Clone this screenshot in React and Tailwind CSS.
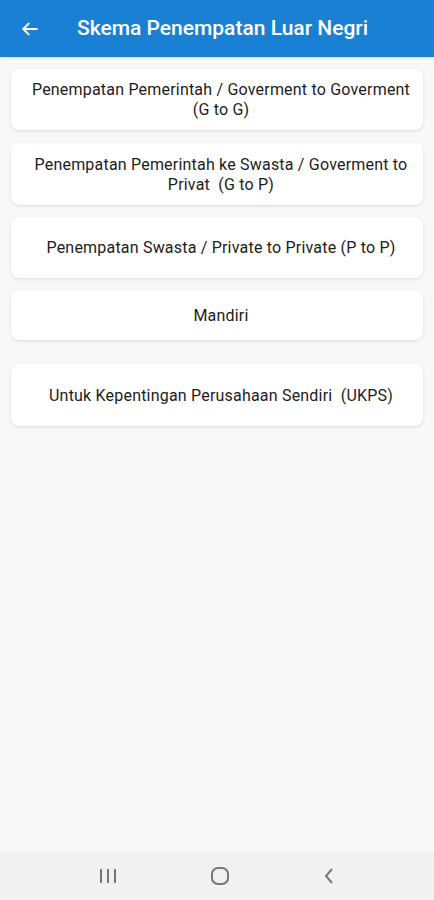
import React from 'react';

const options = [
  { label: 'Penempatan Pemerintah / Goverment to Goverment (G to G)', h: 'h-[61px]', mb: 'mb-[13px]' },
  { label: 'Penempatan Pemerintah ke Swasta / Goverment to Privat  (G to P)', h: 'h-[62px]', mb: 'mb-[12px]' },
  { label: 'Penempatan Swasta / Private to Private (P to P)', h: 'h-[61px]', mb: 'mb-[12px]' },
  { label: 'Mandiri', h: 'h-[50px]', mb: 'mb-[24px]' },
  { label: 'Untuk Kepentingan Perusahaan Sendiri  (UKPS)', h: 'h-[62px]', mb: '' },
];

const App = () => {
  return (
    <div className="w-[434px] h-[900px] flex flex-col bg-[#f8f8f8] font-['Roboto',sans-serif]">
      {/* Header */}
      <div className="h-[57px] bg-[#1a80d4] flex items-center shrink-0 shadow-sm">
        <button className="w-[62px] pl-[20px] flex items-center text-white">
          <svg width="20" height="20" viewBox="0 0 24 24" fill="none" stroke="white" strokeWidth="2.4" strokeLinecap="square">
            <path d="M20 12H5" />
            <path d="M11 5l-7 7 7 7" strokeLinecap="butt" />
          </svg>
        </button>
        <h1 className="ml-[15px] text-white text-[21px] font-medium">Skema Penempatan Luar Negri</h1>
      </div>

      {/* Options */}
      <div className="flex-1 px-[11px] pt-[12px]">
        {options.map((o) => (
          <div
            key={o.label}
            className={`${o.h} ${o.mb} w-[412px] bg-white rounded-[8px] shadow-[0_1px_3px_rgba(0,0,0,0.12)] flex items-center justify-center pl-[20px] pr-[12px]`}
          >
            <p className="text-center text-[16px] leading-[20px] pt-[1px] tracking-[0.2px] text-[#1c1c1c] whitespace-pre-wrap">{o.label}</p>
          </div>
        ))}
      </div>

      {/* System nav bar */}
      <div className="h-[49px] bg-[#f1f1f1] flex items-center justify-center gap-[93px] shrink-0">
        <svg width="18" height="16" viewBox="0 0 18 16" fill="#777">
          <rect x="1" y="1" width="2" height="14" />
          <rect x="8" y="1" width="2" height="14" />
          <rect x="15" y="1" width="2" height="14" />
        </svg>
        <svg width="20" height="20" viewBox="0 0 20 20" fill="none" stroke="#777" strokeWidth="2">
          <rect x="2" y="2" width="16" height="16" rx="6" />
        </svg>
        <svg width="12" height="18" viewBox="0 0 12 18" fill="none" stroke="#777" strokeWidth="2">
          <path d="M9 2L3 9l6 7" />
        </svg>
      </div>
    </div>
  );
};

export default App;
